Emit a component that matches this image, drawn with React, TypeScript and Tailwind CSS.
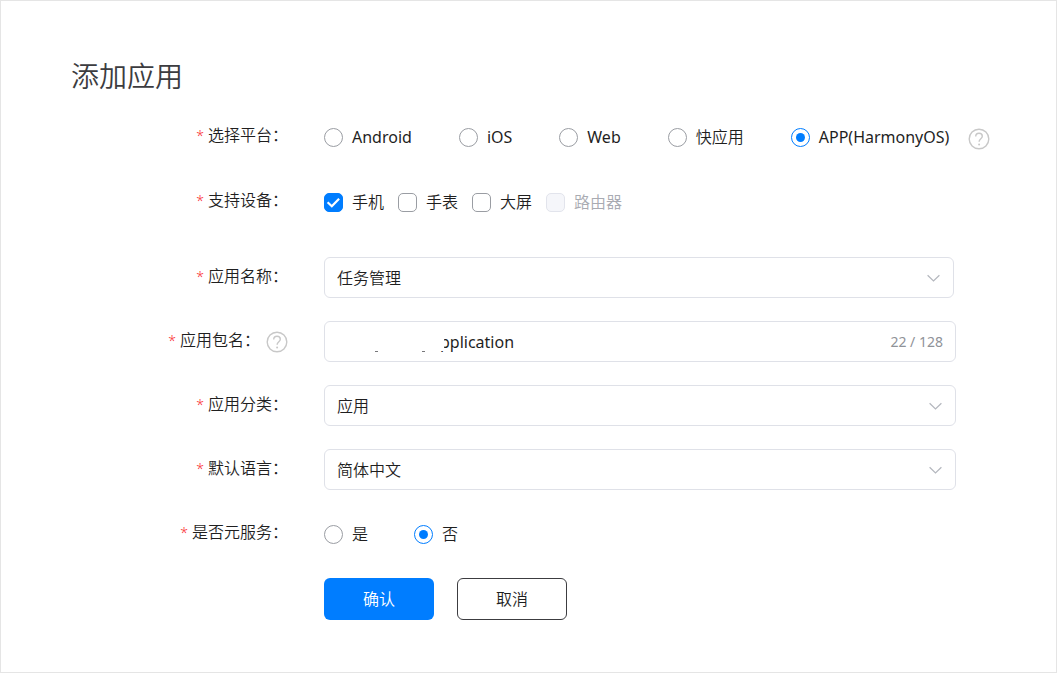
import { useState } from "react";
import type { ReactNode } from "react";

const platforms = ["Android", "iOS", "Web", "快应用", "APP(HarmonyOS)"];
const devices = ["手机", "手表", "大屏"];

function HelpIcon({ label }: { label: string }) {
  return (
    <button type="button" aria-label={label} className="shrink-0 text-[#c8c8c8]">
      <svg className="block h-[22px] w-[22px]" viewBox="0 0 22 22" fill="none" stroke="currentColor" strokeWidth="1.4">
        <circle cx="11" cy="11" r="9.8" />
        <path d="M7.7 8.6c0-2 1.4-3.3 3.3-3.3s3.3 1.2 3.3 2.9c0 2.4-3.2 2.7-3.2 5.6" />
        <circle cx="11.1" cy="16.4" r="1" fill="currentColor" stroke="none" />
      </svg>
    </button>
  );
}

function Chevron() {
  return (
    <svg
      className="pointer-events-none absolute top-1/2 right-3 h-4 w-4 -translate-y-1/2"
      viewBox="0 0 16 16"
      fill="none"
      stroke="#b4b7be"
      strokeWidth="1.2"
    >
      <path d="M1.6 5.2L7.5 11l5.9-5.8" />
    </svg>
  );
}

function LabelCell({ text, htmlFor, id, help }: { text: string; htmlFor?: string; id?: string; help?: string }) {
  const body = (
    <>
      <span className="mr-1 text-sm text-[#fa2a2d]">*</span>
      {text}：
    </>
  );
  return (
    <div className="flex w-[217px] shrink-0 items-center justify-end gap-[6px]">
      {htmlFor ? (
        <label htmlFor={htmlFor} className="pb-1 whitespace-nowrap">
          {body}
        </label>
      ) : (
        <span id={id} className="pb-1 whitespace-nowrap">
          {body}
        </span>
      )}
      {help && <HelpIcon label={help} />}
    </div>
  );
}

function Radio({ name, text, checked, onChange }: { name: string; text: string; checked: boolean; onChange: () => void }) {
  const latin = /^[ -~]+$/.test(text);
  return (
    <label className="flex items-center gap-[9px] whitespace-nowrap">
      <input
        type="radio"
        name={name}
        checked={checked}
        onChange={onChange}
        className="grid h-[19px] w-[19px] shrink-0 appearance-none place-content-center rounded-full border border-[#9a9da3] bg-white checked:border-[#007dff] checked:before:block checked:before:h-[9px] checked:before:w-[9px] checked:before:rounded-full checked:before:bg-[#007dff] checked:before:content-['']"
      />
      <span className={latin ? "font-normal" : undefined}>{text}</span>
    </label>
  );
}

function Checkbox({ text, checked, disabled, onChange }: { text: string; checked: boolean; disabled?: boolean; onChange?: () => void }) {
  return (
    <label className={disabled ? "flex items-center gap-[9px] text-[#a9abb2]" : "flex items-center gap-[9px]"}>
      <span className="relative block h-[19px] w-[19px] shrink-0">
        <input
          type="checkbox"
          checked={checked}
          disabled={disabled}
          onChange={onChange}
          className="block h-[19px] w-[19px] appearance-none rounded-[5px] border border-[#9a9da3] bg-white checked:border-[#007dff] checked:bg-[#007dff] disabled:border-[#e2e4ec] disabled:bg-[#f5f6fa]"
        />
        {checked && (
          <svg className="pointer-events-none absolute inset-0" viewBox="0 0 19 19" fill="none" stroke="#fff" strokeWidth="2.2">
            <path d="M3.6 9.3l4.2 4 7.3-7.6" />
          </svg>
        )}
      </span>
      {text}
    </label>
  );
}

function SelectField({ id, label, options, narrow }: { id: string; label: string; options: string[]; narrow?: boolean }) {
  return (
    <div className="flex h-[41px] items-center gap-9">
      <LabelCell text={label} htmlFor={id} />
      <div className={narrow ? "relative mr-[36px] min-w-0 flex-1" : "relative mr-[34px] min-w-0 flex-1"}>
        <select id={id} className="block h-[41px] w-full appearance-none rounded-md border border-[#dfe1e8] bg-white px-3">
          {options.map((o) => (
            <option key={o}>{o}</option>
          ))}
        </select>
        <Chevron />
      </div>
    </div>
  );
}

function GroupRow({ id, label, children }: { id: string; label: string; children: ReactNode }) {
  return (
    <div role="group" aria-labelledby={id} className="flex h-[42px] items-center gap-9">
      <LabelCell text={label} id={id} />
      {children}
    </div>
  );
}

export default function App() {
  const [platform, setPlatform] = useState("APP(HarmonyOS)");
  const [picked, setPicked] = useState(["手机"]);
  const [service, setService] = useState("否");
  const [name, setName] = useState("pplication");

  const toggle = (d: string) => setPicked((p) => (p.includes(d) ? p.filter((x) => x !== d) : [...p, d]));

  return (
    <main className="min-h-screen border border-[#e5e5e5] bg-white pt-[54px] pr-[66px] pb-[52px] pl-[70px] font-['Noto_Sans','Noto_Sans_CJK_SC',sans-serif] text-base font-[350] text-[#1f1f1f]">
      <h1 className="text-[28px] leading-[42px] text-[#3c3c40]">添加应用</h1>
      <form className="mt-[19px] flex flex-col gap-[23px]" onSubmit={(e) => e.preventDefault()}>
        <GroupRow id="platform" label="选择平台">
          <div className="flex items-center gap-[47px]">
            {platforms.map((p) => (
              <Radio key={p} name="platform" text={p} checked={platform === p} onChange={() => setPlatform(p)} />
            ))}
            <div className="-ml-7 flex pt-1">
              <HelpIcon label="平台说明" />
            </div>
          </div>
        </GroupRow>
        <GroupRow id="devices" label="支持设备">
          <div className="flex items-center gap-[14px]">
            {devices.map((d) => (
              <Checkbox key={d} text={d} checked={picked.includes(d)} onChange={() => toggle(d)} />
            ))}
            <Checkbox text="路由器" checked={false} disabled />
          </div>
        </GroupRow>
        <div className="mt-[11px]">
          <SelectField id="appName" label="应用名称" options={["任务管理"]} narrow />
        </div>
        <div className="flex h-[41px] items-center gap-9">
          <LabelCell text="应用包名" htmlFor="packageName" help="包名说明" />
          <div className="relative mr-[34px] flex min-w-0 flex-1 items-center rounded-md border border-[#dfe1e8] pr-3">
            <input
              id="packageName"
              value={name}
              onChange={(e) => setName(e.target.value)}
              className="h-[39px] min-w-0 flex-1 bg-transparent pl-[115px] font-normal outline-none"
            />
            <span className="text-sm font-normal whitespace-nowrap text-[#8f9298]">22 / 128</span>
            <span className="absolute top-2 left-3 h-[21px] w-[107px] bg-white" />
            <span className="absolute top-[29px] left-[50px] h-px w-[3px] bg-[#77777a]" />
            <span className="absolute top-[29px] left-[97px] h-px w-[3px] bg-[#77777a]" />
          </div>
        </div>
        <SelectField id="category" label="应用分类" options={["应用"]} />
        <SelectField id="language" label="默认语言" options={["简体中文"]} />
        <GroupRow id="service" label="是否元服务">
          <div className="flex items-center gap-[46px]">
            {["是", "否"].map((s) => (
              <Radio key={s} name="service" text={s} checked={service === s} onChange={() => setService(s)} />
            ))}
          </div>
        </GroupRow>
        <div className="flex gap-[23px] pl-[253px]">
          <button type="submit" className="h-[42px] w-[110px] rounded-md bg-[#007dff] text-white">
            确认
          </button>
          <button type="button" className="h-[42px] w-[110px] rounded-md border border-[#3c3c40] bg-white">
            取消
          </button>
        </div>
      </form>
    </main>
  );
}
